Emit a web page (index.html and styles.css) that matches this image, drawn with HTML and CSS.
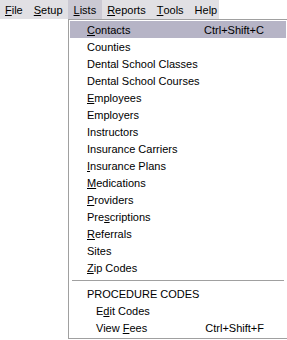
FILE: index.html
```html
<!DOCTYPE html>
<html lang="en">
<head>
<meta charset="UTF-8">
<title>Lists menu</title>
<link rel="stylesheet" href="styles.css">
</head>
<body>
<div class="menubar">
  <span class="top"><u>F</u>ile</span>
  <span class="top"><u>S</u>etup</span>
  <span class="top open"><u>L</u>ists</span>
  <span class="top"><u>R</u>eports</span>
  <span class="top"><u>T</u>ools</span>
  <span class="top">Help</span>
</div>

<div class="dropdown">
  <div class="item hot"><span><u>C</u>ontacts</span><span class="key">Ctrl+Shift+C</span></div>
  <div class="item"><span>Counties</span></div>
  <div class="item"><span>Dental School Classes</span></div>
  <div class="item"><span>Dental School Courses</span></div>
  <div class="item"><span><u>E</u>mployees</span></div>
  <div class="item"><span>Employers</span></div>
  <div class="item"><span>Instructors</span></div>
  <div class="item"><span>Insurance Carriers</span></div>
  <div class="item"><span><u>I</u>nsurance Plans</span></div>
  <div class="item"><span><u>M</u>edications</span></div>
  <div class="item"><span><u>P</u>roviders</span></div>
  <div class="item"><span>Pre<u>s</u>criptions</span></div>
  <div class="item"><span><u>R</u>eferrals</span></div>
  <div class="item"><span>Sites</span></div>
  <div class="item"><span><u>Z</u>ip Codes</span></div>
  <div class="sep"></div>
  <div class="item"><span>PROCEDURE CODES</span></div>
  <div class="item sub"><span>E<u>d</u>it Codes</span></div>
  <div class="item sub"><span>View <u>F</u>ees</span><span class="key">Ctrl+Shift+F</span></div>
</div>
</body>
</html>
```

FILE: styles.css
```css
:root {
  --bar-bg: #e1e0e4;
  --line: #a0a0a0;
}

body {
  margin: 0;
  background: #fff;
  font-family: "Liberation Sans", Arial, sans-serif;
  font-size: 11px;
  color: #000;
}

u {
  text-decoration: underline;
  text-underline-offset: 1px;
}

.menubar {
  display: flex;
  width: 219px;
  height: 19px;
  background: var(--bar-bg);
}

.top {
  display: flex;
  align-items: center;
  padding: 0 5.5px;
  height: 19px;
}

.top:first-child {
  padding-left: 5px;
}

.top.open {
  background: #cbc9d3;
}

.dropdown {
  margin-left: 68px;
  width: 216px;
  border: 1px solid var(--line);
  padding: 1px 1px 2px;
  background: #fff;
}

.item {
  display: flex;
  justify-content: space-between;
  align-items: center;
  height: 17px;
  padding: 0 22px 0 17px;
}

.item.hot {
  background: #b6b4c6;
}

.item.sub {
  padding-left: 26px;
}

.sep {
  height: 1px;
  margin: 4px 2px;
  background: var(--line);
}
```
